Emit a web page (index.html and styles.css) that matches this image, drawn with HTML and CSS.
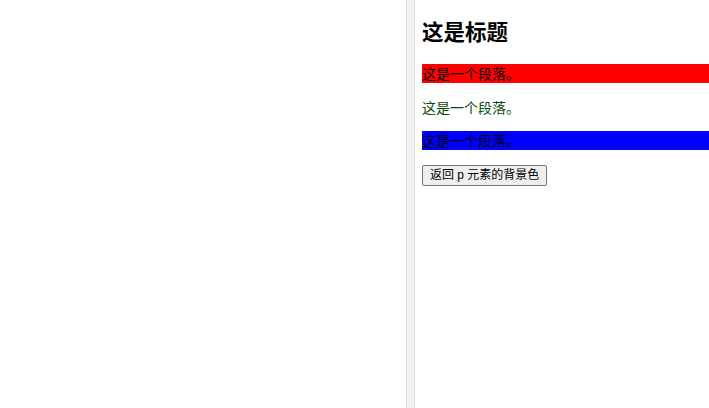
FILE: index.html
```html
<!DOCTYPE html>
<html lang="zh">
<head>
<meta charset="utf-8">
<title>背景色</title>
<link rel="stylesheet" href="styles.css">
</head>
<body>
<div class="layout">
  <div class="left-pane"></div>
  <div class="divider"></div>
  <div class="right-pane">
    <h1 class="title">这是标题</h1>
    <p class="para red">这是一个段落。</p>
    <p class="para green">这是一个段落。</p>
    <p class="para blue">这是一个段落。</p>
    <button class="btn" type="button">返回 p 元素的背景色</button>
  </div>
</div>
</body>
</html>
```

FILE: styles.css
```css
html, body {
  margin: 0;
  padding: 0;
  height: 100%;
  background: #ffffff;
}

body {
  font-family: "Liberation Sans", "Noto Sans CJK SC", sans-serif;
  color: #000;
  overflow: hidden;
}

.layout {
  display: flex;
  height: 408px;
  width: 709px;
}

.left-pane {
  width: 406px;
  flex: none;
  background: #ffffff;
}

.divider {
  width: 7px;
  flex: none;
  border-left: 1px solid #dcdcdc;
  border-right: 1px solid #dcdcdc;
  background: #f1f1f1;
}

.right-pane {
  flex: 1;
  min-width: 0;
  padding: 16px 0 0 7px;
}

.title {
  margin: 0 0 18px 0;
  font-family: "Noto Sans CJK SC", sans-serif;
  font-size: 21.5px;
  line-height: 30px;
  font-weight: bold;
}

.para {
  margin: 0 0 14.5px 0;
  font-family: "Noto Sans CJK SC", sans-serif;
  font-size: 14px;
  line-height: 19px;
}

.red { background: #ff0000; }
.green { color: #0a4a0a; }
.blue { background: #0000ff; }

.btn {
  font-family: "Liberation Sans", "Noto Sans CJK SC", sans-serif;
  font-size: 12px;
  line-height: 17px;
  padding: 1px 7px;
  border: 1px solid #767676;
  border-radius: 2px;
  background: #efefef;
  color: #000;
  margin: 0;
}
```
